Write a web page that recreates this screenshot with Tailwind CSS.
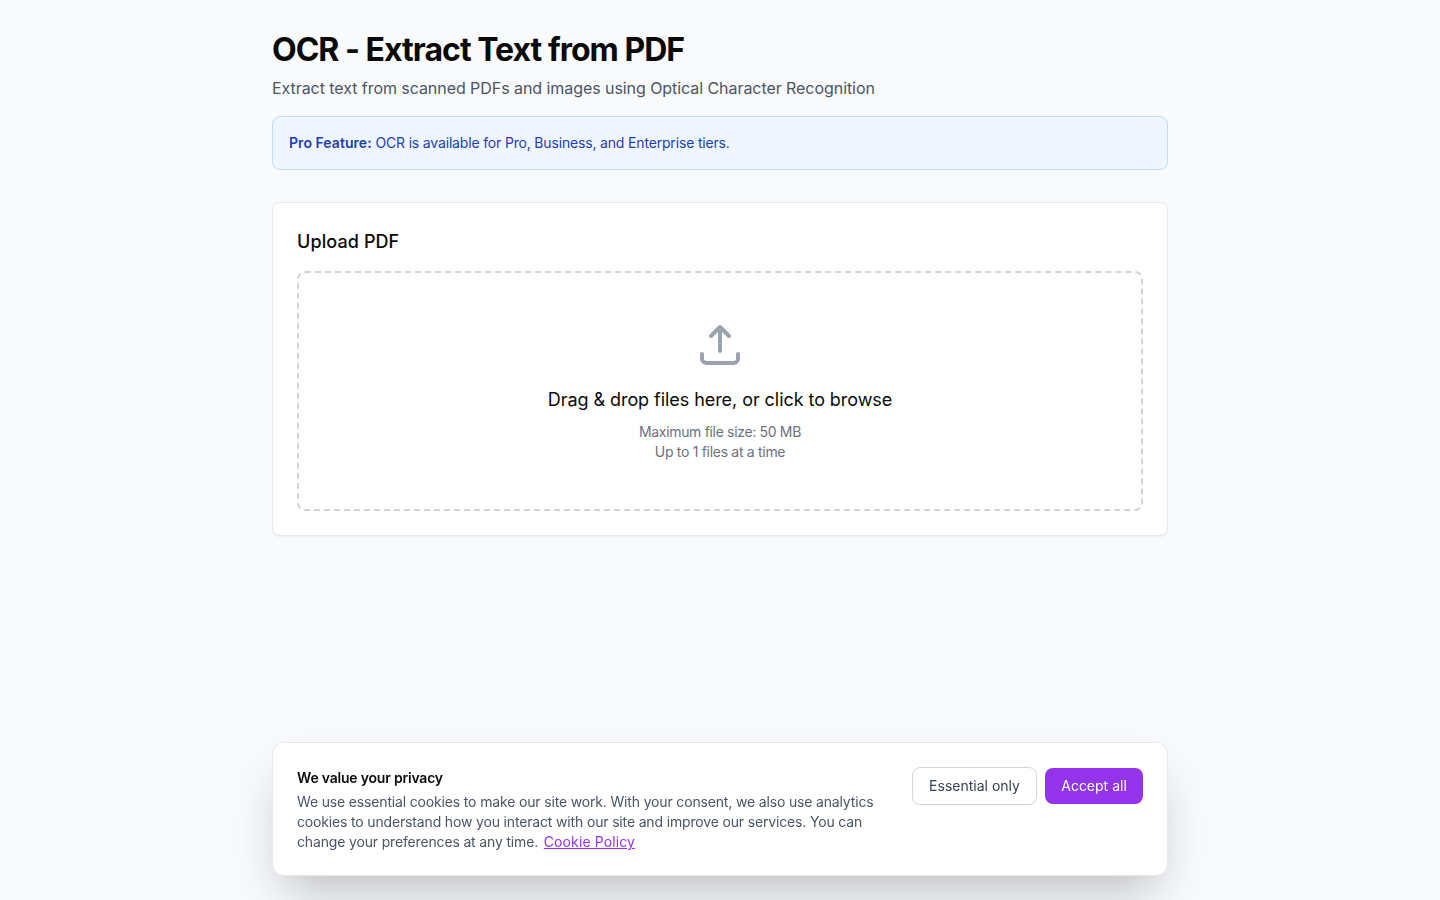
<!DOCTYPE html>
<html lang="en">
<head>
  <meta charset="UTF-8">
  <meta name="viewport" content="width=device-width, initial-scale=1.0">
  <title>OCR - Extract Text from PDF</title>
  <script src="https://cdn.jsdelivr.net/npm/@tailwindcss/browser@4"></script>
</head>
<body class="bg-[#f9fafc] font-['Inter',sans-serif] min-h-screen">
  <main class="w-[896px] mx-auto pt-[30px]">
    <h1 class="text-[32px] leading-[40px] font-bold text-[#0a0a0a] tracking-[-0.98px] mb-[6px]">OCR - Extract Text from PDF</h1>
    <p class="text-base leading-6 text-[#4b5563] mb-4 tracking-[-0.06px]">Extract text from scanned PDFs and images using Optical Character Recognition</p>

    <!-- Pro notice -->
    <div class="bg-[#eff6ff] border border-[#bfdbfe] rounded-lg p-4 mb-8 text-sm leading-5 text-[#1e40af] tracking-[-0.17px]">
      <strong class="font-semibold tracking-[0.05px]">Pro Feature:</strong> OCR is available for Pro, Business, and Enterprise tiers.
    </div>

    <!-- Upload card -->
    <section class="bg-white border border-[#e5e7eb] rounded-lg p-6 shadow-[0_1px_2px_rgba(0,0,0,0.05)]">
      <h2 class="text-lg leading-[30px] font-medium text-[#0a0a0a] mb-[14px] tracking-[0.1px]">Upload PDF</h2>
      <div class="border-2 border-dashed border-[#d1d5db] rounded-lg p-12 flex flex-col items-center text-center">
        <svg class="w-12 h-12 text-[#9ca3af] mb-4" fill="none" stroke="currentColor" viewBox="0 0 24 24" stroke-width="2" stroke-linecap="round" stroke-linejoin="round">
          <path d="M3 16.5v2.25A2.25 2.25 0 0 0 5.25 21h13.5A2.25 2.25 0 0 0 21 18.75V16.5m-13.5-9L12 3m0 0 4.5 4.5M12 3v12"/>
        </svg>
        <p class="text-lg leading-[30px] text-[#0a0a0a] mb-[6px] tracking-[-0.06px]">Drag &amp; drop files here, or click to browse</p>
        <p class="pt-px text-sm leading-5 text-[#6b7280] tracking-[-0.33px]">Maximum file size: 50 MB</p>
        <p class="-mb-px text-sm leading-5 text-[#6b7280] tracking-[-0.3px]">Up to 1 files at a time</p>
      </div>
    </section>
  </main>

  <!-- Cookie banner -->
  <div class="fixed bottom-6 left-1/2 -translate-x-1/2 w-[896px] bg-white border border-[#e5e7eb] rounded-xl shadow-2xl p-6 flex items-start justify-between">
    <div class="w-[580px] pt-px -mb-px">
      <p class="text-sm leading-5 font-semibold text-[#0a0a0a] tracking-[-0.2px]">We value your privacy</p>
      <p class="text-sm leading-5 text-[#4b5563] mt-1 tracking-[-0.16px]">We use essential cookies to make our site work. With your consent, we also use analytics cookies to understand how you interact with our site and improve our services. You can change your preferences at any time. <a href="#" class="ml-[2px] text-[#9333ea] underline tracking-[0.1px]">Cookie Policy</a></p>
    </div>
    <div class="flex items-center gap-2">
      <button class="border border-[#d1d5db] bg-white rounded-lg py-2 text-sm leading-5 text-[#374151] w-[125px] whitespace-nowrap">Essential only</button>
      <button class="bg-[#9333ea] rounded-lg py-2 text-sm leading-5 text-white w-[98px] whitespace-nowrap">Accept all</button>
    </div>
  </div>
</body>
</html>
